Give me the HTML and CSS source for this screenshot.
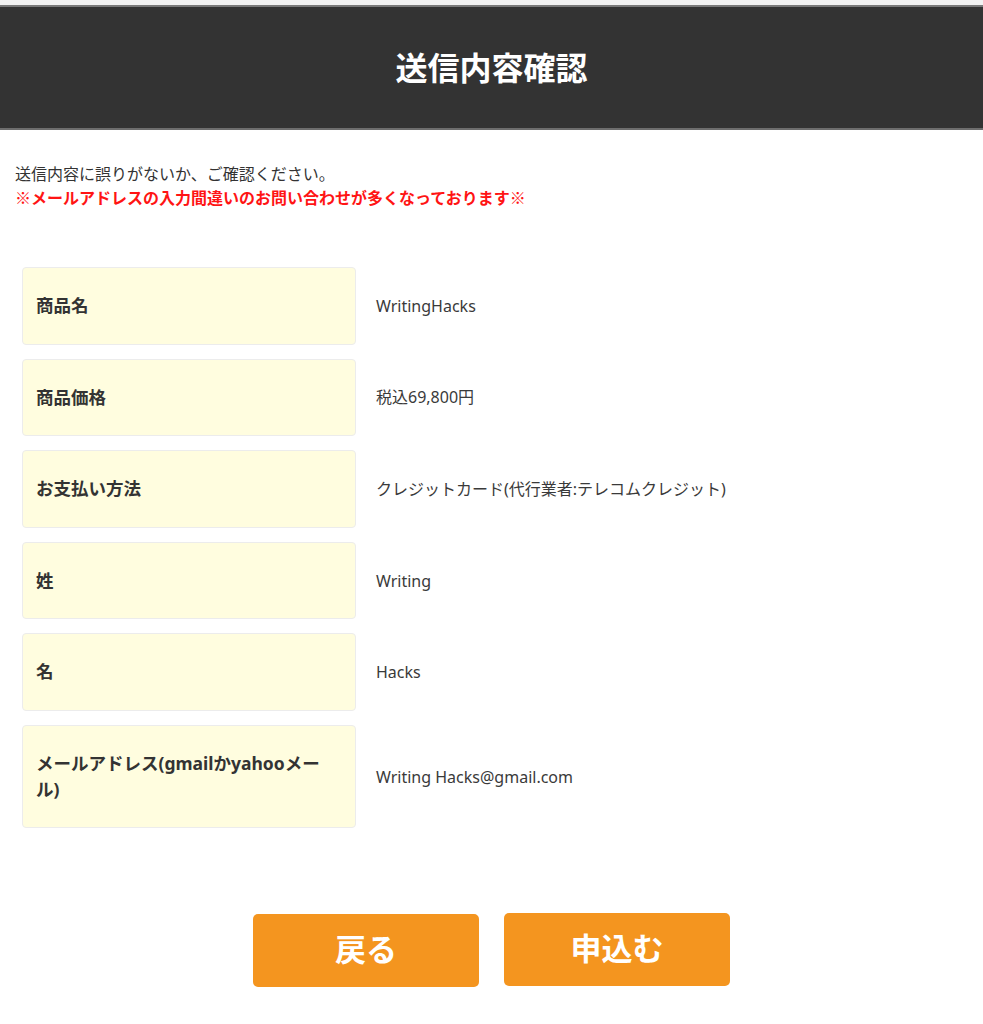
FILE: index.html
```html
<!DOCTYPE html>
<html lang="ja">
<head>
<meta charset="utf-8">
<title>送信内容確認</title>
<link rel="stylesheet" href="styles.css">
</head>
<body>
<div class="topstrip"></div>
<header class="header">
  <h1 class="title">送信内容確認</h1>
</header>
<main class="content">
  <p class="intro">送信内容に誤りがないか、ご確認ください。<br><span class="warn">※メールアドレスの入力間違いのお問い合わせが多くなっております※</span></p>
  <div class="rows">
    <div class="row"><div class="label">商品名</div><div class="value">WritingHacks</div></div>
    <div class="row"><div class="label">商品価格</div><div class="value">税込69,800円</div></div>
    <div class="row"><div class="label">お支払い方法</div><div class="value">クレジットカード(代行業者:テレコムクレジット)</div></div>
    <div class="row"><div class="label">姓</div><div class="value">Writing</div></div>
    <div class="row"><div class="label">名</div><div class="value">Hacks</div></div>
    <div class="row"><div class="label">メールアドレス(gmailかyahooメール)</div><div class="value">Writing Hacks@gmail.com</div></div>
  </div>
  <div class="buttons">
    <button class="btn btn-back" type="button">戻る</button>
    <button class="btn btn-submit" type="button">申込む</button>
  </div>
</main>
</body>
</html>
```
FILE: styles.css
```css
html, body {
  margin: 0;
  padding: 0;
  background: #fff;
}
body {
  font-family: "Noto Sans", "Noto Sans CJK JP", sans-serif;
  color: #333;
}
.topstrip {
  height: 5px;
  background: #f2f2f2;
}
.header {
  background: #333;
  border-top: 2px solid #7a7a7a;
  border-bottom: 2px solid #6e6e6e;
  height: 121px;
  box-sizing: content-box;
  display: flex;
  align-items: center;
  justify-content: center;
}
.title {
  margin: 0 0 4px 0;
  color: #fff;
  font-family: "Noto Sans CJK JP", sans-serif;
  font-size: 32px;
  font-weight: 700;
  line-height: 1;
}
.content {
  padding: 31px 15px 0 15px;
}
.intro {
  margin: 0;
  font-family: "Noto Sans CJK JP", sans-serif;
  font-size: 16px;
  line-height: 24px;
  color: #333;
}
.warn {
  color: #ff1414;
  font-weight: 700;
}
.rows {
  margin-top: 58px;
  padding-left: 7px;
  display: flex;
  flex-direction: column;
  gap: 14px;
}
.row {
  display: flex;
  align-items: center;
}
.label {
  box-sizing: border-box;
  width: 334px;
  flex: none;
  background: #fffddf;
  border: 1px solid #ececec;
  border-radius: 4px;
  padding: 25px 28px 25px 13px;
  font-size: 17.5px;
  line-height: 25.6px;
  font-weight: 700;
  color: #333;
}
.value {
  margin-left: 20px;
  font-size: 16px;
  line-height: 26px;
  color: #3a3a3a;
}
.buttons {
  margin-top: 86px;
  display: flex;
  justify-content: center;
  align-items: flex-start;
  gap: 25px;
  margin-left: -15px;
  margin-right: -15px;
}
.btn {
  width: 226px;
  height: 73px;
  padding: 0 0 6px 0;
  border: none;
  border-radius: 5px;
  background: #f4951f;
  color: #fff;
  font-family: "Noto Sans CJK JP", sans-serif;
  font-size: 31px;
  font-weight: 700;
  line-height: 1;
  cursor: pointer;
}
.btn-submit {
  margin-top: -1px;
}
```
